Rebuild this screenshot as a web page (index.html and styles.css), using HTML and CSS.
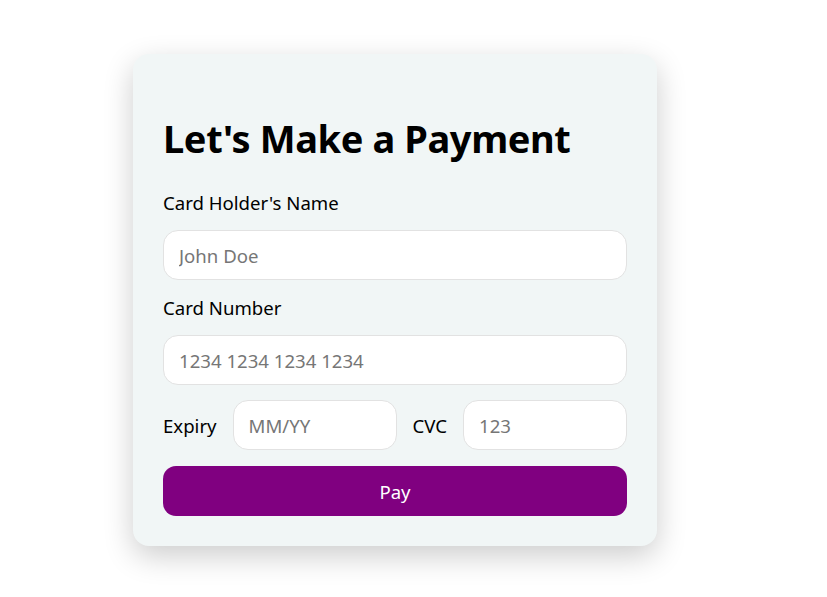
FILE: index.html
```html
<!DOCTYPE html>
<html lang="en">
<head>
<meta charset="utf-8">
<title>Payment</title>
<link rel="stylesheet" href="styles.css">
</head>
<body>
<main class="page">
  <form class="card">
    <h1 class="title">Let's Make a Payment</h1>
    <label class="label" for="name">Card Holder's Name</label>
    <input class="field" id="name" type="text" placeholder="John Doe">
    <label class="label" for="num">Card Number</label>
    <input class="field" id="num" type="text" placeholder="1234 1234 1234 1234">
    <div class="row">
      <label class="label" for="exp">Expiry</label>
      <input class="field" id="exp" type="text" placeholder="MM/YY">
      <label class="label" for="cvc">CVC</label>
      <input class="field" id="cvc" type="text" placeholder="123">
    </div>
    <button class="pay" type="button">Pay</button>
  </form>
</main>
</body>
</html>
```
FILE: styles.css
```css
* { box-sizing: border-box; }
html, body { margin: 0; padding: 0; background: #ffffff; }
body { font-family: "Noto Sans", "Open Sans", sans-serif; color: #000; }
.page {
  min-height: 597px;
  display: flex;
  align-items: flex-start;
  padding: 54px 0 0 133px;
}
.card {
  width: 524px;
  background: #f1f6f6;
  border-radius: 16px;
  padding: 30px;
  display: flex;
  flex-direction: column;
  gap: 15px;
  box-shadow: 0 10px 30px rgba(0, 0, 0, 0.2);
}
.title {
  margin: 29px 0 12px;
  font-size: 38px;
  line-height: 50px;
  font-weight: 700;
  letter-spacing: -0.4px;
}
.label {
  font-size: 18.6px;
  line-height: 25px;
  white-space: nowrap;
}
.field {
  height: 50px;
  width: 100%;
  min-width: 0;
  border: 1px solid #e2e2e2;
  border-radius: 15px;
  background: #fff;
  padding: 0 15px;
  font-family: inherit;
  font-size: 18.6px;
  color: #000;
  outline: none;
}
.field::placeholder { color: #767676; }
.row {
  display: flex;
  align-items: center;
  gap: 16px;
}
.row .field { flex: 1; }
.pay {
  margin-top: 1px;
  height: 50px;
  border: none;
  border-radius: 13px;
  background: #800080;
  color: #fff;
  font-family: inherit;
  font-size: 18.6px;
  cursor: pointer;
}
```
